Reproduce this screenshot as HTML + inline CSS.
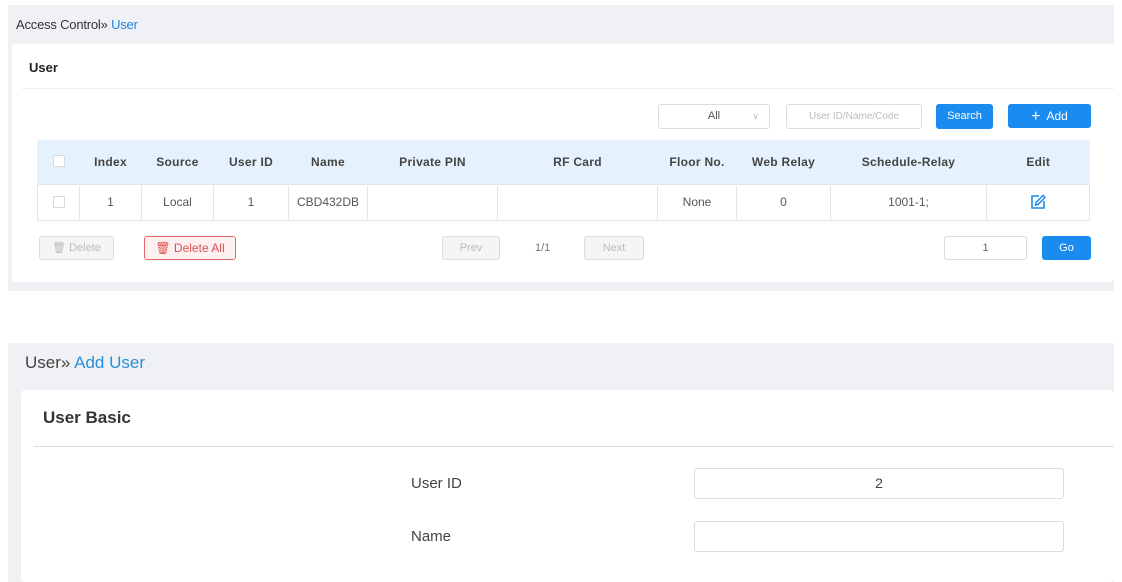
<!DOCTYPE html>
<html><head><style>
*{box-sizing:border-box;margin:0;padding:0}
body{width:1122px;height:582px;background:#fff;font-family:"Liberation Sans",Arial,sans-serif;position:relative;overflow:hidden;color:#333}
.abs{position:absolute}
.gray{background:#eff1f4}
.card{background:#fff;border-radius:4px}
table{border-collapse:collapse;position:absolute;left:37px;top:140px;width:1053px;font-size:12px}
th{background:#e5f1fd;height:44px;padding-top:1px;font-weight:bold;color:#444;border-left:1px solid #eaf3fc;letter-spacing:0.3px}
td{height:36px;text-align:center;color:#555;border:1px solid #e4e4e4}
.cb{display:inline-block;width:12px;height:12px;border:1px solid #d8d8d8;background:#fff;border-radius:1px}
.btn{position:absolute;font-size:11px;text-align:center;border-radius:3px}
.inp{position:absolute;border:1px solid #dcdcdc;border-radius:3px;background:#fff;font-size:11px;text-align:center}
</style></head><body>
<div class="abs gray" style="left:8px;top:5px;width:1106px;height:286px"></div>
<div class="abs" style="left:16px;top:17px;font-size:13px;color:#333;letter-spacing:-0.2px">Access Control» <span style="color:#1e88e5">User</span></div>
<div class="abs card" style="left:12px;top:44px;width:1102px;height:238px"></div>
<div class="abs" style="left:29px;top:60px;font-size:13px;font-weight:bold;color:#222">User</div>
<div class="abs" style="left:22px;top:88px;width:1092px;height:1px;background:#eceef0"></div>

<div class="inp" style="left:658px;top:104px;width:112px;height:25px;line-height:23px;color:#555">All<span style="position:absolute;right:10px;color:#bbb;font-size:9px">∨</span></div>
<div class="inp" style="left:786px;top:104px;width:136px;height:25px;line-height:23px;color:#bbb;font-size:10px">User ID/Name/Code</div>
<div class="btn" style="left:936px;top:104px;width:57px;height:25px;line-height:25px;background:#1a8cf0;color:#fff">Search</div>
<div class="btn" style="left:1008px;top:104px;width:83px;height:24px;line-height:24px;background:#1a8cf0;color:#fff;font-size:12px"><span style="font-size:16px;vertical-align:-1px">+</span>&nbsp; Add</div>

<table>
<tr><th style="width:42px"><span class="cb"></span></th><th style="width:62px">Index</th><th style="width:72px">Source</th><th style="width:75px">User ID</th><th style="width:79px">Name</th><th style="width:130px">Private PIN</th><th style="width:160px">RF Card</th><th style="width:79px">Floor No.</th><th style="width:94px">Web Relay</th><th style="width:156px">Schedule-Relay</th><th>Edit</th></tr>
<tr><td style="padding-top:2px"><span class="cb"></span></td><td>1</td><td>Local</td><td>1</td><td>CBD432DB</td><td></td><td></td><td>None</td><td>0</td><td>1001-1;</td><td><svg width="16" height="16" viewBox="0 0 16 16" style="vertical-align:middle"><path d="M9 2H2v12h12V7" fill="none" stroke="#1a8cf0" stroke-width="1.6"/><path d="M13 1.5l2 2-7 7-2.5.5.5-2.5z" fill="none" stroke="#1a8cf0" stroke-width="1.5"/></svg></td></tr>
</table>

<div class="btn" style="left:39px;top:236px;width:75px;height:24px;line-height:22px;border:1px solid #ddd;background:#f5f5f5;color:#bbb">🗑 Delete</div>
<div class="btn" style="left:144px;top:236px;width:92px;height:24px;line-height:22px;border:1px solid #e86b6b;background:#fdf0f0;color:#e05050;font-size:12px">🗑 Delete All</div>
<div class="btn" style="left:442px;top:236px;width:58px;height:24px;line-height:22px;border:1px solid #ddd;background:#f5f5f5;color:#bbb">Prev</div>
<div class="abs" style="left:535px;top:242px;font-size:11px;color:#777">1/1</div>
<div class="btn" style="left:584px;top:236px;width:60px;height:24px;line-height:22px;border:1px solid #ddd;background:#f5f5f5;color:#bbb">Next</div>
<div class="inp" style="left:944px;top:236px;width:83px;height:24px;line-height:22px;color:#666">1</div>
<div class="btn" style="left:1042px;top:236px;width:49px;height:24px;line-height:24px;background:#1a8cf0;color:#fff">Go</div>

<div class="abs gray" style="left:8px;top:343px;width:1106px;height:239px"></div>
<div class="abs" style="left:25px;top:353px;font-size:17px;color:#444">User» <span style="color:#2b8fd9">Add User</span></div>
<div class="abs card" style="left:21px;top:390px;width:1093px;height:192px"></div>
<div class="abs" style="left:43px;top:408px;font-size:17px;font-weight:bold;color:#333">User Basic</div>
<div class="abs" style="left:34px;top:446px;width:1080px;height:1px;background:#d8d8d8"></div>
<div class="abs" style="left:411px;top:475px;font-size:15px;color:#444">User ID</div>
<div class="abs" style="left:411px;top:528px;font-size:15px;color:#444">Name</div>
<div class="inp" style="left:694px;top:468px;width:370px;height:31px;line-height:29px;font-size:14px;color:#444">2</div>
<div class="inp" style="left:694px;top:521px;width:370px;height:31px"></div>
</body></html>
